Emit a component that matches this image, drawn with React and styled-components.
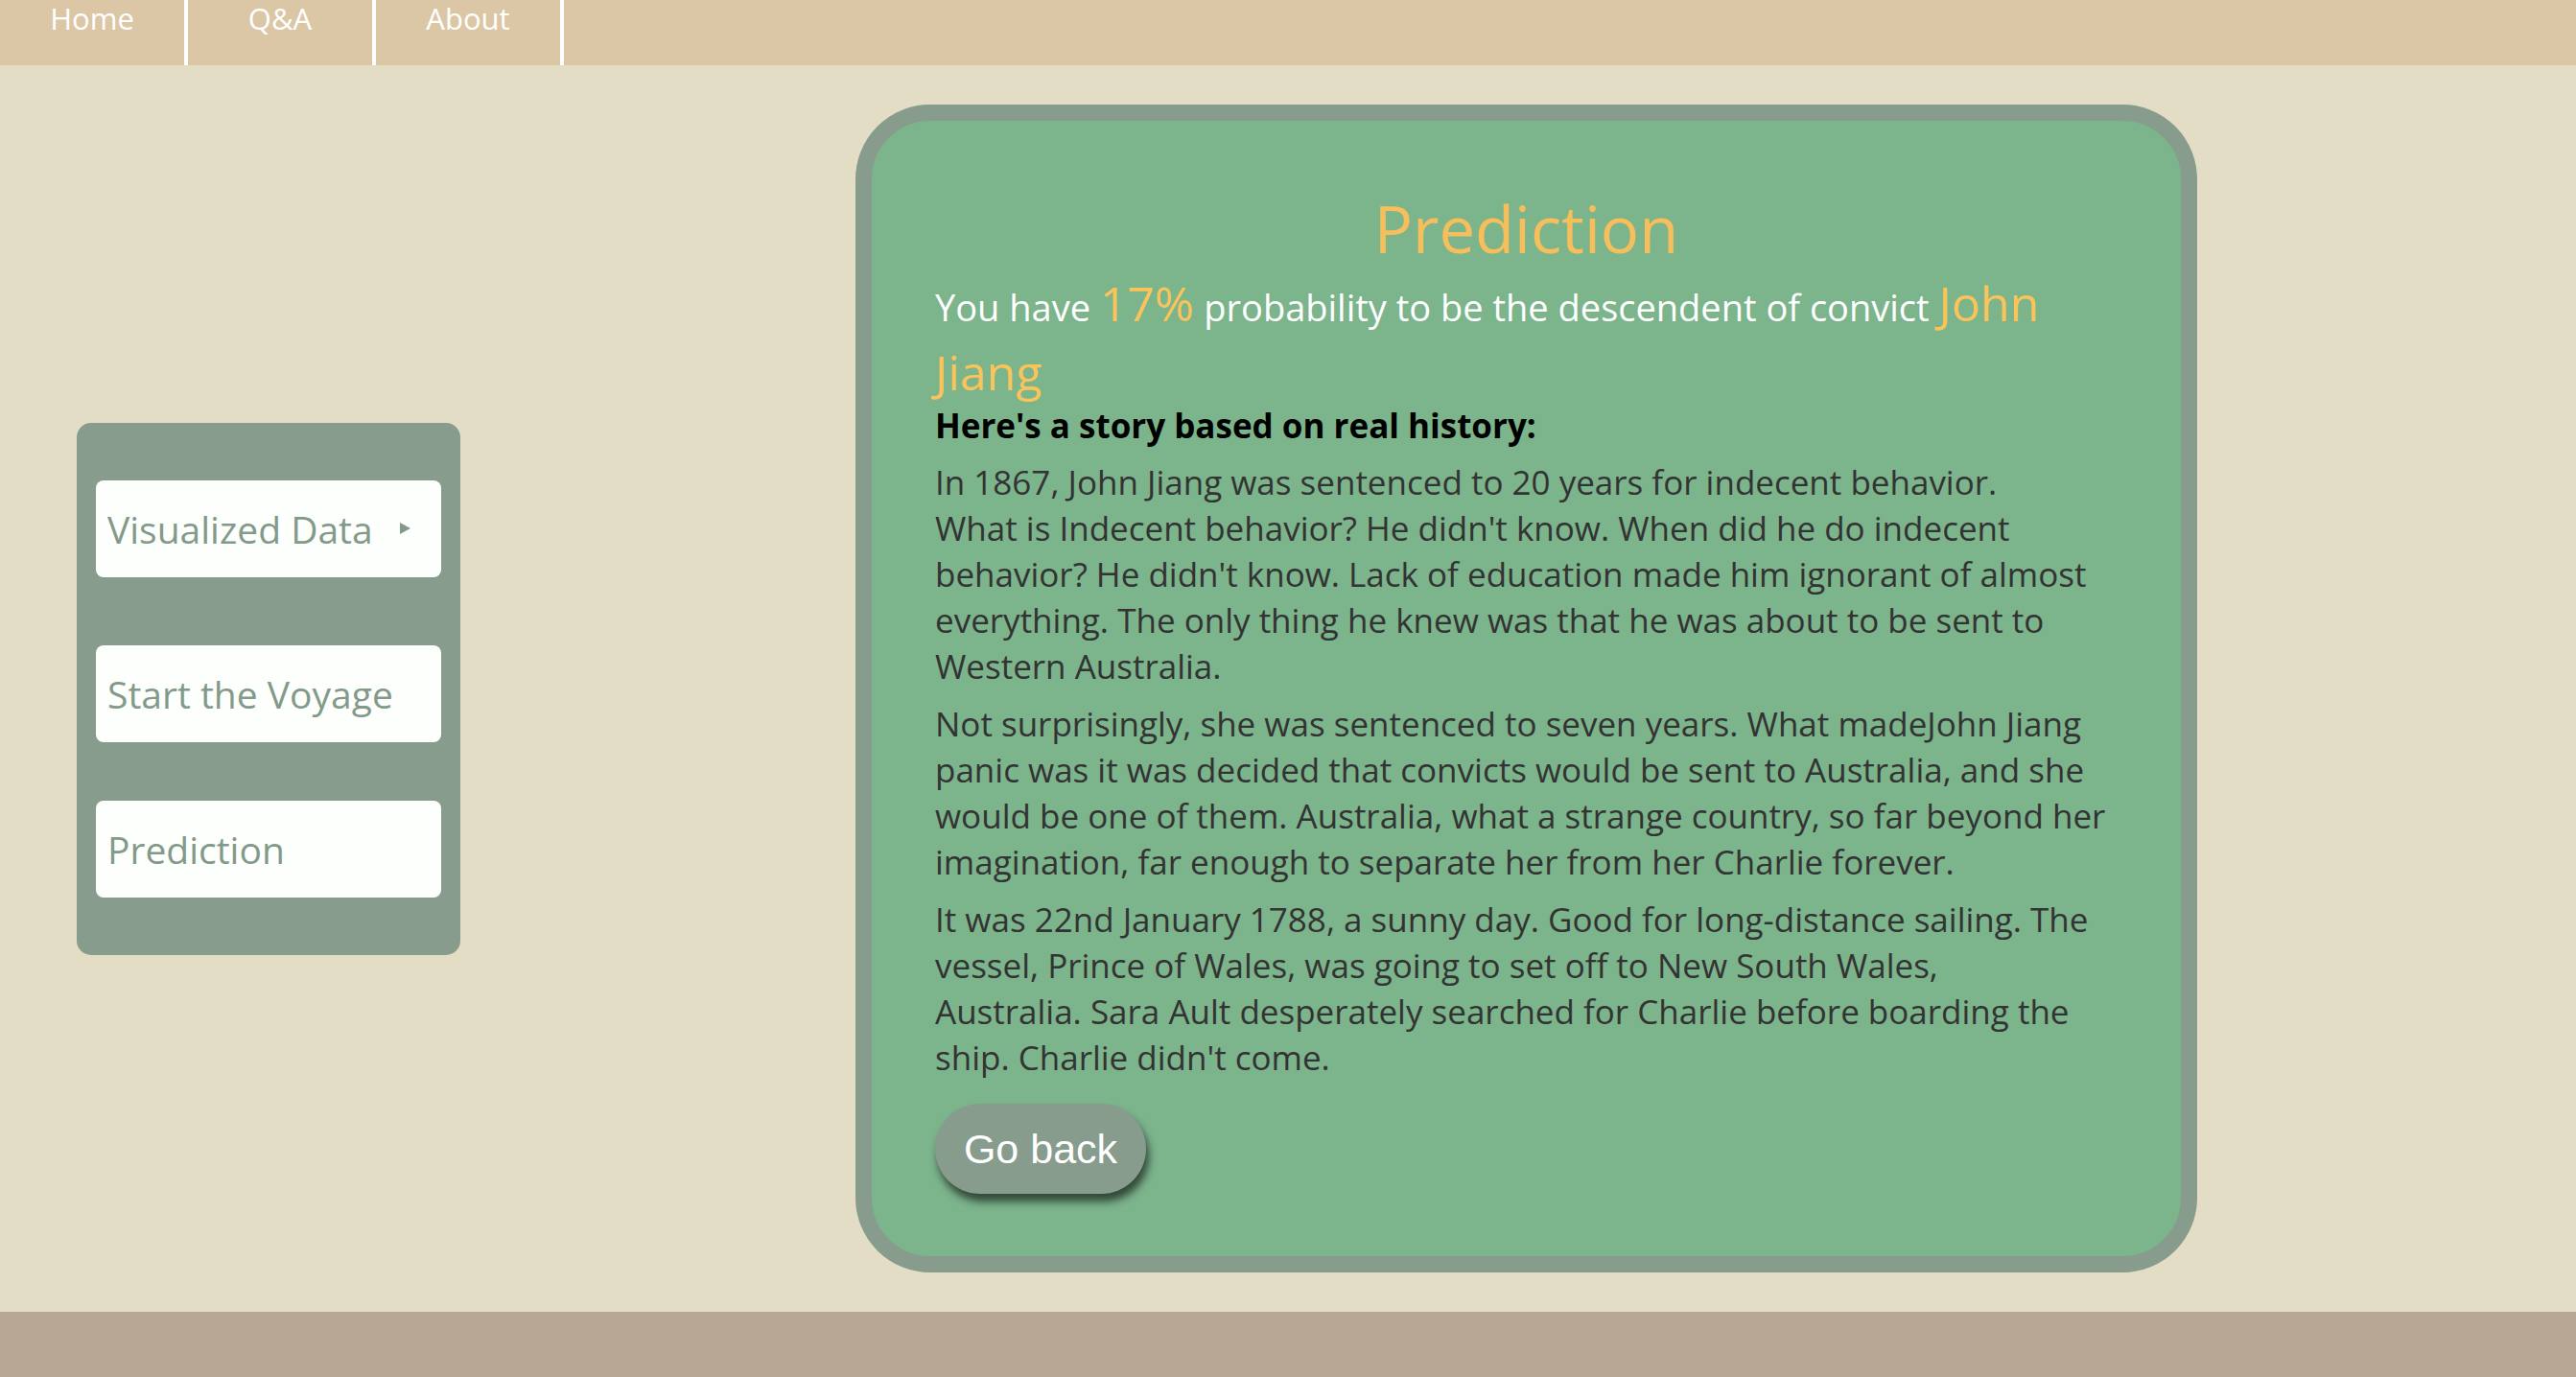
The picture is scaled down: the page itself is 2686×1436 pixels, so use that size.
import React from 'react';
import styled, { createGlobalStyle } from 'styled-components';

// base page styles
const GlobalStyle = createGlobalStyle`
  html, body {
    margin: 0;
    padding: 0;
    background-color: #e2ddc4;
  }
  * {
    box-sizing: border-box;
  }
`;

const Page = styled.div`
  font-family: 'Open Sans', sans-serif;
  min-height: 100vh;
  display: flex;
  flex-direction: column;
  background-color: #e2ddc4;
`;

// top navigation
const NavBar = styled.nav`
  height: 68px;
  background-color: #dbc7a6;
  display: flex;
`;

const NavItem = styled.a`
  width: 196px;
  height: 68px;
  border-right: 4px solid #ffffff;
  color: #ffffff;
  font-size: 31px;
  line-height: 38px;
  text-align: center;
  text-decoration: none;
  cursor: pointer;
`;

const Main = styled.main`
  flex: 1;
  display: flex;
  align-items: center;
  padding: 40px 0 40px 80px;
`;

// left menu
const SideMenu = styled.aside`
  width: 400px;
  padding: 60px 20px;
  background-color: #879c8c;
  border-radius: 15px;
  display: flex;
  flex-direction: column;
  gap: 61px;
`;

const MenuButton = styled.button`
  height: 101px;
  margin-bottom: ${(p) => (p.$dropdown ? '10px' : '0')};
  padding: 0 12px;
  border: none;
  border-radius: 8px;
  background-color: #fdfffd;
  color: #839a8a;
  font-family: 'Open Sans', sans-serif;
  font-size: 39px;
  text-align: left;
  display: flex;
  align-items: center;
  cursor: pointer;
`;

const Caret = styled.svg`
  width: 11px;
  height: 12px;
  margin-left: 28px;
  fill: #839a8a;
`;

// result card
const Card = styled.section`
  width: 1399px;
  margin-left: 412px;
  padding: 72px 66px 65px;
  background-color: #7cb48c;
  border: 17px solid #879c8c;
  border-radius: 78px;
`;

const Title = styled.h1`
  margin: 0 0 4px;
  font-size: 67px;
  font-weight: 400;
  line-height: 80px;
  color: #f6bf5b;
  text-align: center;
`;

const Verdict = styled.p`
  margin: 0;
  font-size: 38px;
  line-height: 68px;
  color: #ffffff;
`;

const Highlight = styled.span`
  font-size: 50px;
  color: #fbc45a;
`;

const StoryHeading = styled.h3`
  margin: 0 0 17px;
  font-size: 35px;
  font-weight: 700;
  line-height: 36px;
  color: #000000;
`;

const Story = styled.p`
  margin: 0 0 12px;
  font-size: 35px;
  line-height: 48px;
  color: #333333;
`;

const Line = styled.span`
  display: block;
`;

const BackButton = styled.button`
  margin-top: 12px;
  width: 220px;
  height: 94px;
  border: none;
  border-radius: 47px;
  background-color: #879c8c;
  color: #ffffff;
  font-family: 'Liberation Sans', Arial, sans-serif;
  font-size: 43px;
  box-shadow: 3px 8px 8px rgba(0, 0, 0, 0.6);
  cursor: pointer;
`;

const Footer = styled.footer`
  height: 68px;
  background-color: #b7a794;
`;

const story = [
  [
    'In 1867, John Jiang was sentenced to 20 years for indecent behavior.',
    "What is Indecent behavior? He didn't know. When did he do indecent",
    "behavior? He didn't know. Lack of education made him ignorant of almost",
    'everything. The only thing he knew was that he was about to be sent to',
    'Western Australia.',
  ],
  [
    'Not surprisingly, she was sentenced to seven years. What madeJohn Jiang',
    'panic was it was decided that convicts would be sent to Australia, and she',
    'would be one of them. Australia, what a strange country, so far beyond her',
    'imagination, far enough to separate her from her Charlie forever.',
  ],
  [
    'It was 22nd January 1788, a sunny day. Good for long-distance sailing. The',
    'vessel, Prince of Wales, was going to set off to New South Wales,',
    'Australia. Sara Ault desperately searched for Charlie before boarding the',
    "ship. Charlie didn't come.",
  ],
];

const App = () => {
  return (
    <Page>
      <GlobalStyle />
      <NavBar>
        <NavItem>Home</NavItem>
        <NavItem>Q&amp;A</NavItem>
        <NavItem>About</NavItem>
      </NavBar>

      <Main>
        <SideMenu>
          <MenuButton $dropdown>
            Visualized Data
            <Caret viewBox="0 0 11 12">
              <path d="M0 0 L11 6 L0 12 Z" />
            </Caret>
          </MenuButton>
          <MenuButton>Start the Voyage</MenuButton>
          <MenuButton>Prediction</MenuButton>
        </SideMenu>

        <Card>
          <Title>Prediction</Title>
          <Verdict>
            You have <Highlight>17%</Highlight> probability to be the descendent of convict{' '}
            <Highlight>John</Highlight> <Highlight>Jiang</Highlight>
          </Verdict>
          <StoryHeading>Here's a story based on real history:</StoryHeading>
          {story.map((para, i) => (
            <Story key={i}>
              {para.map((line, j) => (
                <Line key={j}>{line}</Line>
              ))}
            </Story>
          ))}
          <BackButton>Go back</BackButton>
        </Card>
      </Main>

      <Footer />
    </Page>
  );
};

export default App;
